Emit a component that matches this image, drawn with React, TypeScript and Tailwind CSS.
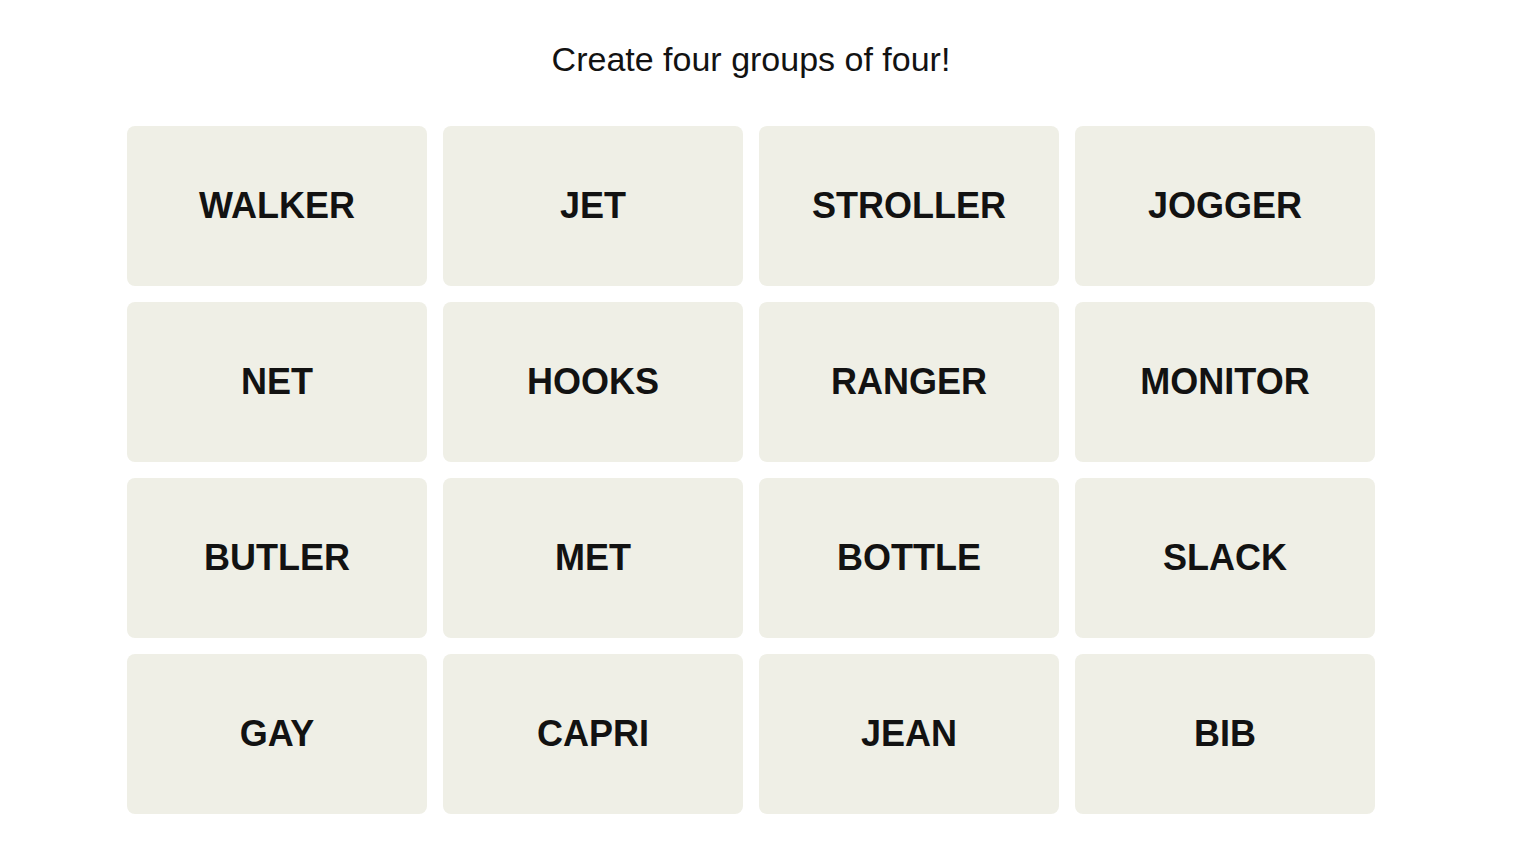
const words = [
  'WALKER', 'JET', 'STROLLER', 'JOGGER',
  'NET', 'HOOKS', 'RANGER', 'MONITOR',
  'BUTLER', 'MET', 'BOTTLE', 'SLACK',
  'GAY', 'CAPRI', 'JEAN', 'BIB',
]

function Tile({ word }: { word: string }) {
  return (
    <button className="flex h-[160px] w-[300px] items-center justify-center rounded-lg bg-[#efefe6] text-[36px] font-bold leading-[40px] text-[#121212]">
      {word}
    </button>
  )
}

export default function App() {
  return (
    <div className="min-h-screen bg-white font-['Liberation_Sans',Arial,sans-serif]">
      <div className="ml-[127px] w-[1248px] pt-[39px]">
        <h1 className="text-center text-[34px] font-normal leading-[40px] text-[#121212]">
          Create four groups of four!
        </h1>
        <div className="mt-[47px] grid grid-cols-4 gap-4">
          {words.map((w) => (
            <Tile key={w} word={w} />
          ))}
        </div>
      </div>
    </div>
  )
}
